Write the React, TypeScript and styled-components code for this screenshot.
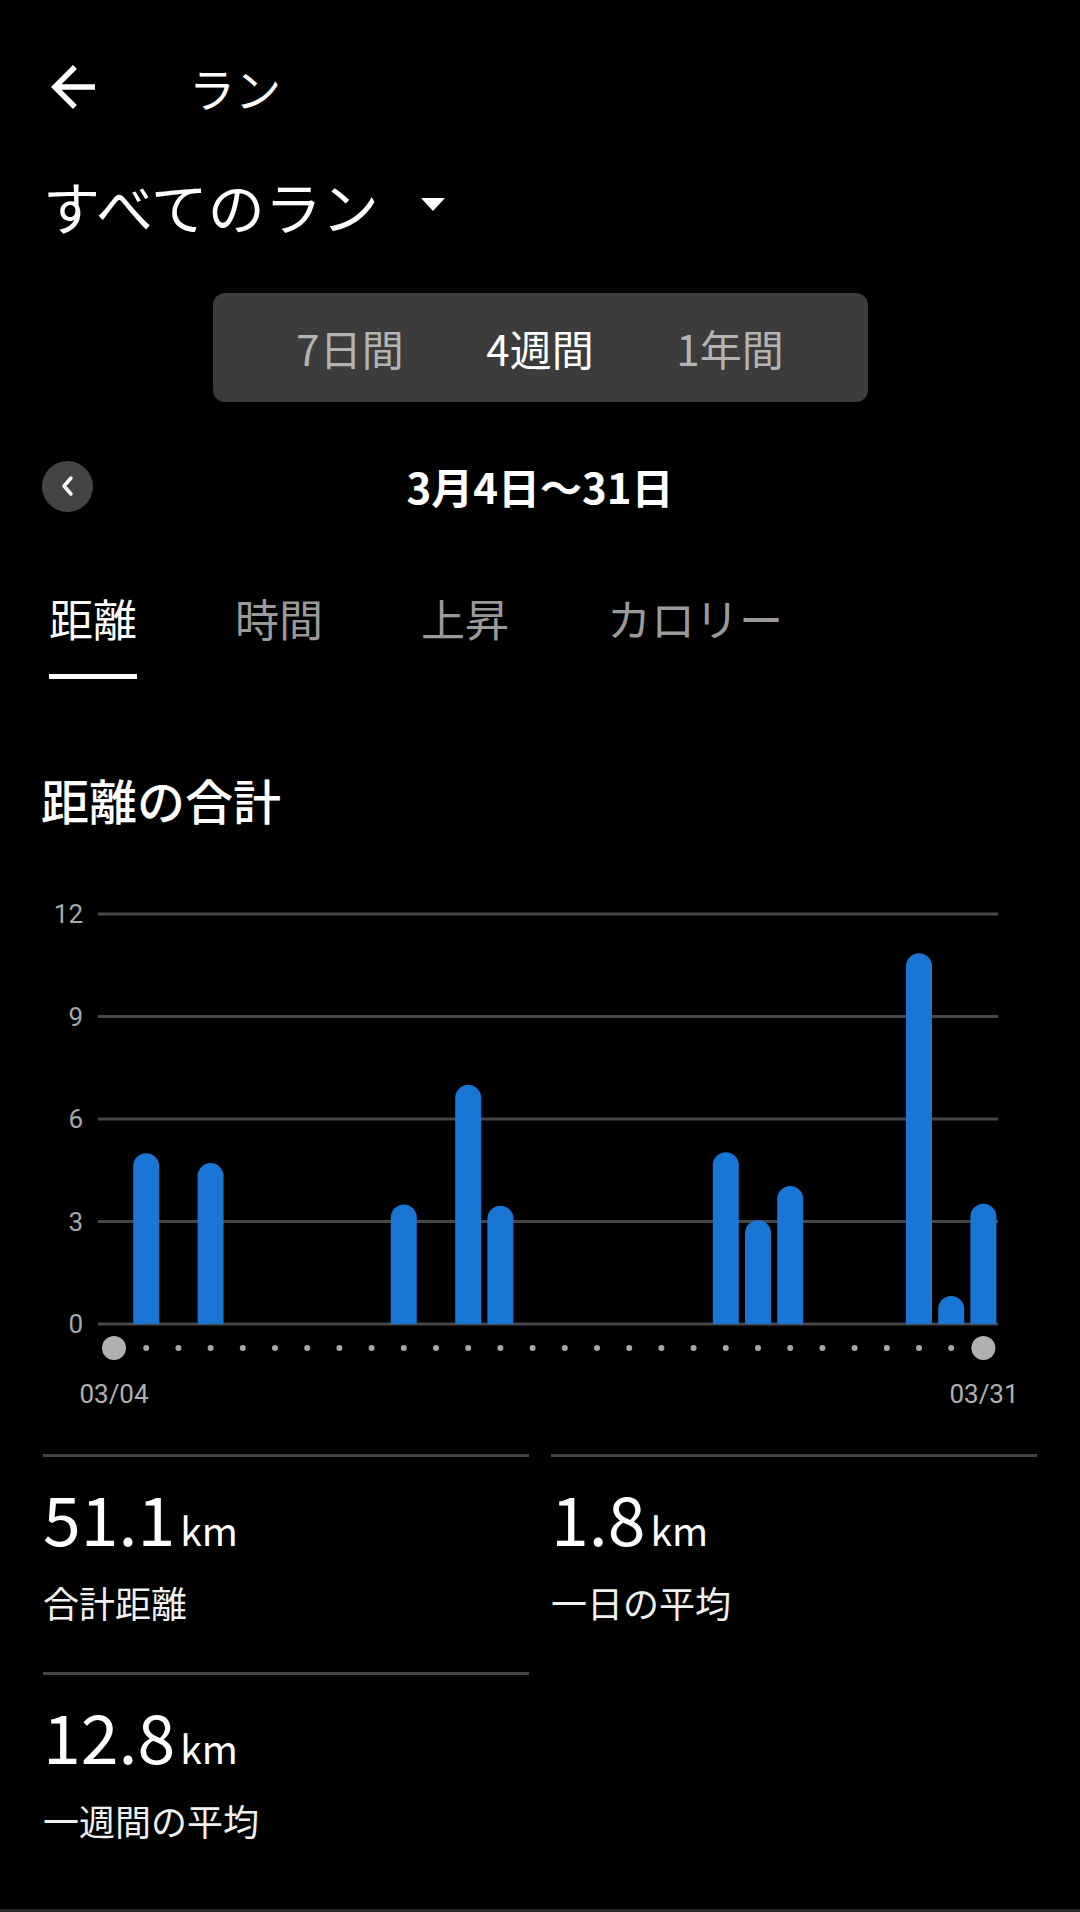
import React from "react";
import styled, { createGlobalStyle } from "styled-components";

const GlobalStyle = createGlobalStyle`
    html, body {
        margin: 0;
        padding: 0;
        background: #000;
    }
`

const Page = styled.div`
    width: 1080px;
    min-height: 1912px;
    background: #000;
    color: #fff;
    font-family: "Noto Sans CJK JP", "Noto Sans", sans-serif;
    display: flex;
    flex-direction: column;
`

const Header = styled.header`
    height: 174px;
    display: flex;
    align-items: center;
    padding-left: 40px;
`

const Title = styled.h1`
    margin: 0 0 0 83px;
    font-size: 46px;
    font-weight: 400;
    line-height: 1;
`

const FilterRow = styled.div`
    height: 62px;
    display: flex;
    align-items: center;
    gap: 42px;
    padding-left: 43px;
`

const FilterLabel = styled.span`
    font-size: 57px;
    line-height: 1;
`

const Segment = styled.div`
    margin: 57px auto 0;
    width: 655px;
    height: 109px;
    border-radius: 12px;
    background: #3c3c3c;
    display: grid;
    grid-template-columns: repeat(3, 190px);
    justify-content: center;
    align-items: center;
`

const SegItem = styled.span<{ $active?: boolean }>`
    text-align: center;
    font-size: 42px;
    line-height: 1;
    color: ${p => p.$active ? "#fff" : "#b3b3b3"};
`

const DateRow = styled.div`
    margin-top: 33px;
    height: 102px;
    display: grid;
    grid-template-columns: 1fr auto 1fr;
    align-items: center;
    padding: 0 42px;
`

const CircleButton = styled.div`
    width: 51px;
    height: 51px;
    border-radius: 50%;
    background: #444;
    display: flex;
    align-items: center;
    justify-content: center;
`

const DateText = styled.div`
    font-size: 42px;
    font-weight: 700;
    line-height: 1;
`

const Tabs = styled.nav`
    margin-top: 59px;
    display: flex;
    gap: 98px;
    padding-left: 49px;
`

const TabItem = styled.div<{ $active?: boolean }>`
    display: flex;
    flex-direction: column;
    font-size: 44px;
    line-height: 1;
    color: ${p => p.$active ? "#fff" : "#9a9a9a"};

    &::after {
        content: "";
        margin-top: 34px;
        height: 5px;
        background: ${p => p.$active ? "#fff" : "transparent"};
    }
`

const SectionTitle = styled.h2`
    margin: 96px 0 0;
    padding-left: 41px;
    font-size: 48px;
    font-weight: 500;
    line-height: 1;
`

const ChartSvg = styled.svg`
    display: block;
    margin-top: 57px;
`

const StatsGrid = styled.div`
    margin-top: 34px;
    display: grid;
    grid-template-columns: 1fr 1fr;
    column-gap: 22px;
    padding: 0 43px;
`

const StatCell = styled.div`
    border-top: 3px solid #444;
    padding: 26px 0 52px;
`

const StatValue = styled.div`
    font-size: 68px;
    line-height: 1;
    display: flex;
    align-items: baseline;
`

const StatUnit = styled.span`
    font-size: 39px;
    margin-left: 5px;
`

const StatLabel = styled.div`
    margin-top: 33px;
    font-size: 36px;
    line-height: 1;
    color: #f0f0f0;
`

const BottomRule = styled.div`
    margin-top: 19px;
    height: 3px;
    background: #2a2a2a;
`

// distance per day index (0 = 03/04)
const runs: { [day: number]: number } = {
    1: 5.0, 3: 4.71, 9: 3.5, 11: 7.0, 12: 3.46,
    19: 5.03, 20: 3.04, 21: 4.04, 25: 10.85, 26: 0.82, 27: 3.52,
}

const Chart = () => {
    const base = 444;
    const unit = 102.5 / 3;
    const x0 = 114;
    const step = 32.2;
    const ticks = [0, 3, 6, 9, 12];
    const days = Array.from({ length: 28 }, (_, i) => i);

    return (
        <ChartSvg width={1080} height={540} viewBox="0 0 1080 540">
            {ticks.map(t => {
                const y = base - t * unit;
                return (
                    <g key={t}>
                        <line x1={98} x2={998} y1={y} y2={y} stroke="#474747" strokeWidth={3} />
                        <text x={83} y={y} textAnchor="end" dominantBaseline="central"
                            fontFamily="Roboto, sans-serif" fontSize={26} fill="#a8a8a8">{t}</text>
                    </g>
                )
            })}
            {Object.entries(runs).map(([d, v]) => {
                const cx = x0 + step * Number(d);
                const top = base - v * unit;
                const r = 13;
                return (
                    <path key={d} fill="#1a76d4"
                        d={`M${cx - r} ${base} V${top + r} A${r} ${r} 0 0 1 ${cx + r} ${top + r} V${base} Z`} />
                )
            })}
            {days.map(i => {
                const edge = i === 0 || i === 27;
                return <circle key={i} cx={x0 + step * i} cy={468} r={edge ? 12 : 3} fill={edge ? "#b0b0b0" : "#a8a8a8"} />
            })}
            <text x={114} y={514} textAnchor="middle" dominantBaseline="central"
                fontFamily="Roboto, sans-serif" fontSize={26} fill="#b0b0b0">03/04</text>
            <text x={984} y={514} textAnchor="middle" dominantBaseline="central"
                fontFamily="Roboto, sans-serif" fontSize={26} fill="#b0b0b0">03/31</text>
        </ChartSvg>
    )
}

const Stat = ({ value, label }: { value: string; label: string }) => (
    <StatCell>
        <StatValue>{value}<StatUnit>km</StatUnit></StatValue>
        <StatLabel>{label}</StatLabel>
    </StatCell>
)

export default function App() {
    return (
        <Page>
            <GlobalStyle />
            <Header>
                <svg width="66" height="66" viewBox="0 0 24 24">
                    <path fill="#fff" d="M20 11H7.83l5.59-5.59L12 4l-8 8 8 8 1.41-1.41L7.83 13H20v-2z" />
                </svg>
                <Title>ラン</Title>
            </Header>
            <FilterRow>
                <FilterLabel>すべてのラン</FilterLabel>
                <svg width="24" height="14" viewBox="0 0 24 14">
                    <polygon points="0,0 24,0 12,13" fill="#fff" />
                </svg>
            </FilterRow>
            <Segment>
                <SegItem>7日間</SegItem>
                <SegItem $active>4週間</SegItem>
                <SegItem>1年間</SegItem>
            </Segment>
            <DateRow>
                <CircleButton>
                    <svg width="16" height="22" viewBox="0 0 16 22">
                        <polyline points="11,3 4,11 11,19" fill="none" stroke="#fff" strokeWidth="3.5" strokeLinecap="round" strokeLinejoin="round" />
                    </svg>
                </CircleButton>
                <DateText>3月4日〜31日</DateText>
                <span />
            </DateRow>
            <Tabs>
                <TabItem $active>距離</TabItem>
                <TabItem>時間</TabItem>
                <TabItem>上昇</TabItem>
                <TabItem>カロリー</TabItem>
            </Tabs>
            <SectionTitle>距離の合計</SectionTitle>
            <Chart />
            <StatsGrid>
                <Stat value="51.1" label="合計距離" />
                <Stat value="1.8" label="一日の平均" />
                <Stat value="12.8" label="一週間の平均" />
            </StatsGrid>
            <BottomRule />
        </Page>
    )
}
